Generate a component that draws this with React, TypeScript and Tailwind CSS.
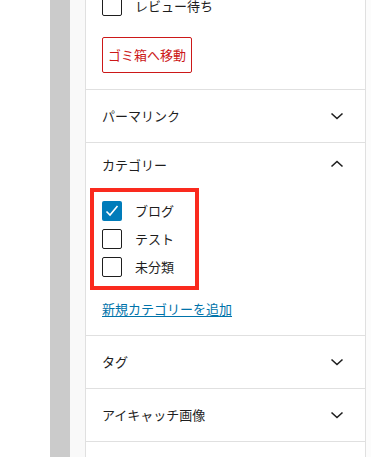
import React from 'react';

const Chevron = ({ up = false }: { up?: boolean }) => (
  <svg width="24" height="24" viewBox="0 0 24 24" className="text-[#1e1e1e]">
    {up ? (
      <path d="M6.5 14.5 12 9.5l5.5 5" fill="none" stroke="currentColor" strokeWidth="1.6" />
    ) : (
      <path d="M6.5 9.5 12 14.5l5.5-5" fill="none" stroke="currentColor" strokeWidth="1.6" />
    )}
  </svg>
);

const Checkbox = ({ checked = false }: { checked?: boolean }) =>
  checked ? (
    <span className="flex h-[20px] w-[20px] items-center justify-center rounded-[2px] bg-[#007cba]">
      <svg width="16" height="16" viewBox="0 0 16 16">
        <path d="M2.5 8.5 6 12l7.5-9" fill="none" stroke="#fff" strokeWidth="1.6" />
      </svg>
    </span>
  ) : (
    <span className="block h-[20px] w-[20px] rounded-[2px] border-[1.5px] border-[#1e1e1e] bg-white" />
  );

const Row = ({ label, checked }: { label: string; checked?: boolean }) => (
  <label className="flex h-[20px] items-center">
    <Checkbox checked={checked} />
    <span className="ml-[13px] text-[13px] text-[#1e1e1e]">{label}</span>
  </label>
);

const ClosedPanel = ({ title }: { title: string }) => (
  <div className="flex h-[53px] items-center justify-between border-b border-[#e0e0e0] pl-[16px] pr-[16px]">
    <span className="text-[13px] text-[#1e1e1e]">{title}</span>
    <Chevron />
  </div>
);

export default function App() {
  const categories = [
    { label: 'ブログ', checked: true },
    { label: 'テスト', checked: false },
    { label: '未分類', checked: false },
  ];

  return (
    <div className="flex h-[457px] w-[371px] overflow-hidden bg-white font-['Noto_Sans_CJK_JP','Noto_Sans',sans-serif] leading-[18px]">
      <div className="w-[50px] shrink-0 bg-white" />
      <div className="w-[20px] shrink-0 bg-[#cbcbcb]" />
      <div className="w-[15px] shrink-0 bg-[#f9f9f9]" />
      <div className="flex w-[281px] shrink-0 flex-col border-x border-[#e0e0e0] bg-white">
        {/* status section (scrolled) */}
        <div className="border-b border-[#e0e0e0] pb-[16px] pl-[16px]">
          <div className="-mt-[4px]">
            <Row label="レビュー待ち" />
          </div>
          <button className="mt-[21px] flex h-[36px] w-[90px] items-center justify-center rounded-[2px] border border-[#cc1818] text-[13px] text-[#cc1818]">
            ゴミ箱へ移動
          </button>
        </div>

        <ClosedPanel title="パーマリンク" />

        {/* Categories */}
        <div className="border-b border-[#e0e0e0]">
          <div className="flex h-[45px] items-start justify-between pl-[16px] pr-[16px] pt-[13px]">
            <span className="text-[13px] text-[#1e1e1e]">カテゴリー</span>
            <span className="-mt-[4px]">
              <Chevron up />
            </span>
          </div>
          <div className="ml-[4px] flex w-[109px] flex-col gap-[8px] border-[4px] border-[#fa2a1e] pb-[9px] pl-[8px] pt-[9px]">
            {categories.map((c) => (
              <Row key={c.label} label={c.label} checked={c.checked} />
            ))}
          </div>
          <div className="pb-[17px] pl-[16px] pt-[8px]">
            <a className="text-[13px] text-[#0073aa] underline underline-offset-2">新規カテゴリーを追加</a>
          </div>
        </div>

        <ClosedPanel title="タグ" />
        <ClosedPanel title="アイキャッチ画像" />
      </div>
      <div className="flex-1 bg-[#fcfcfc]" />
    </div>
  );
}
